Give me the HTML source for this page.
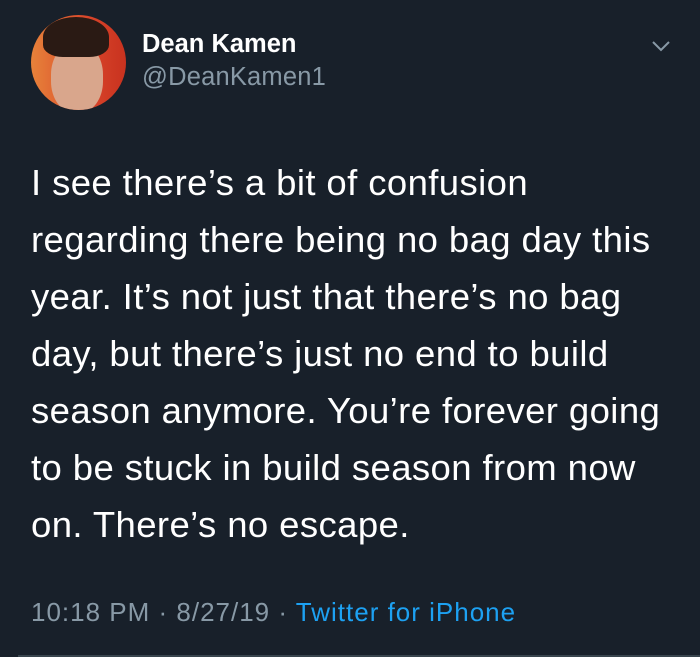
<!DOCTYPE html>
<html><head><style>
body{margin:0;width:700px;height:657px;background:#18202a;font-family:"Liberation Sans",sans-serif;position:relative;overflow:hidden}
.av{position:absolute;left:31px;top:15px;width:95px;height:95px;border-radius:50%;background:linear-gradient(90deg,#e7823a,#d9452a 60%,#c8321f);overflow:hidden}
.hair{position:absolute;left:12px;top:2px;width:66px;height:40px;border-radius:50% 50% 30% 30%;background:#2a1a14}
.face{position:absolute;left:20px;top:28px;width:52px;height:70px;border-radius:45%;background:#d9a68c}
.name{position:absolute;left:142px;top:30px;color:#fff;font-weight:bold;font-size:25.5px}
.h{position:absolute;left:142px;top:63px;color:#8899a6;font-size:25.5px;letter-spacing:0.2px}
.t{position:absolute;left:31px;top:154px;color:#fff;font-size:36.5px;line-height:57px;letter-spacing:0.4px;white-space:nowrap}
.f{position:absolute;left:31px;top:597px;color:#8899a6;font-size:26px;letter-spacing:1px}
.f span{color:#1da1f2}
.line{position:absolute;left:18px;right:0;top:655px;height:2px;background:#38444d}
</style></head><body>
<div class="av"><div class="face"></div><div class="hair"></div></div>
<div class="name">Dean Kamen</div>
<div class="h">@DeanKamen1</div>
<svg style="position:absolute;left:651px;top:40px" width="20" height="12"><path d="M2 2 L10 10 L18 2" stroke="#8899a6" stroke-width="2" fill="none"/></svg>
<div class="t">I see there’s a bit of confusion<br>regarding there being no bag day this<br>year. It’s not just that there’s no bag<br>day, but there’s just no end to build<br>season anymore. You’re forever going<br>to be stuck in build season from now<br>on. There’s no escape.</div>
<div class="f">10:18 PM · 8/27/19 · <span>Twitter for iPhone</span></div>
<div class="line"></div>
</body></html>
